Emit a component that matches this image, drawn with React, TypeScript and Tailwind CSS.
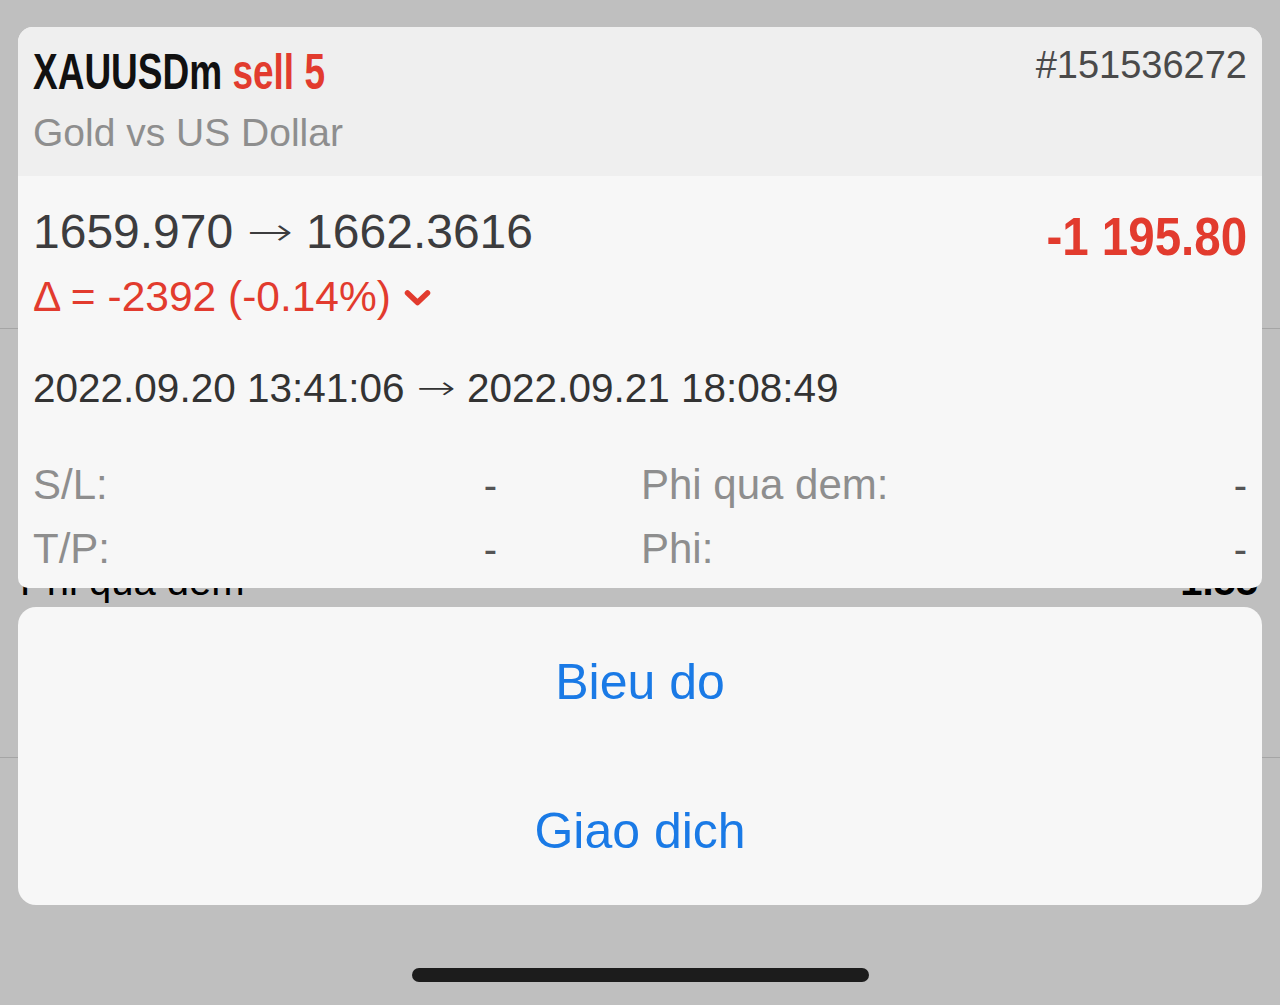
import React from "react";

const SANS = "font-['Liberation_Sans','Helvetica',Arial,sans-serif]";

function Chevron() {
  return (
    <svg width="27" height="18" viewBox="0 0 27 18" className="ml-[13px] mt-[2px]">
      <path d="M3.5 4 L13.5 13.5 L23.5 4" fill="none" stroke="#e23b2e" strokeWidth="5.5" strokeLinecap="round" strokeLinejoin="round" />
    </svg>
  );
}

function Arrow() {
  return (
    <span className="mx-[3px] inline-block origin-center scale-x-[1.15] scale-y-[0.8] font-['DejaVu_Sans',sans-serif] font-extralight">
      →
    </span>
  );
}

function Field({ label, value }: { label: string; value: string }) {
  return (
    <div className="flex h-[64px] items-center justify-between">
      <span className="text-[42px] leading-[48px] text-[#8e8e8e]">{label}</span>
      <span className="text-[40px] leading-[48px] text-[#555]">{value}</span>
    </div>
  );
}

export default function App() {
  return (
    <div className={`relative h-[1005px] w-[1280px] overflow-hidden bg-[#bfbfbf] ${SANS}`}>
      {/* dimmed page behind the sheet */}
      <div className="flex flex-col pt-[328px]">
        <div className="h-px bg-[#a5a5a5]" />
        <div className="flex h-[428px] flex-col">
          <div className="mt-[228px] flex h-[48px] items-center justify-between px-[20px] text-[40px] leading-[48px] text-black">
            <span>Phi qua dem</span>
            <span className="pr-[2px] font-semibold">1.55</span>
          </div>
        </div>
        <div className="h-px bg-[#a5a5a5]" />
      </div>

      {/* action sheet */}
      <div className="absolute inset-0 flex flex-col px-[18px] pt-[27px]">
        <div className="overflow-hidden rounded-t-[15px] rounded-b-[10px] bg-[#f7f7f7]">
          <div className="flex h-[149px] justify-between bg-[#efefef] px-[15px]">
            <div className="flex flex-col pt-[17px]">
              <div className="h-[56px] whitespace-nowrap">
                <span className="inline-block origin-left scale-x-[0.74] text-[50px] leading-[56px] font-bold">
                  <span className="text-[#111]">XAUUSDm</span>{" "}
                  <span className="text-[#e23b2e]">sell 5</span>
                </span>
              </div>
              <div className="mt-[10px] text-[39px] leading-[46px] text-[#8e8e8e]">Gold vs US Dollar</div>
            </div>
            <div className="pt-[15px] text-[38px] leading-[46px] text-[#4a4a4a]">#151536272</div>
          </div>

          <div className="flex h-[412px] flex-col px-[15px] pt-[27px]">
            <div className="flex justify-between">
              <div className="flex flex-col">
                <div className="h-[56px] whitespace-nowrap text-[48px] leading-[56px] text-[#3c3c3e]">
                  1659.970 <Arrow /> 1662.3616
                </div>
                <div className="mt-[16px] flex h-[44px] items-center whitespace-nowrap text-[42.5px] leading-[44px] text-[#e23b2e]">
                  <span>Δ = -2392 (-0.14%)</span>
                  <Chevron />
                </div>
              </div>
              <div className="mt-[5px] h-[56px] whitespace-nowrap">
                <span className="inline-block origin-right scale-x-[0.88] text-[54px] leading-[56px] font-bold text-[#e23b2e]">-1 195.80</span>
              </div>
            </div>
            <div className="mt-[47px] h-[44px] whitespace-nowrap text-[40.5px] leading-[44px] text-[#333]">
              2022.09.20 13:41:06 <Arrow /> 2022.09.21 18:08:49
            </div>
            <div className="mt-[43px] grid grid-cols-[464px_1fr] gap-x-[144px]">
              <div className="flex flex-col">
                <Field label="S/L:" value="-" />
                <Field label="T/P:" value="-" />
              </div>
              <div className="flex flex-col">
                <Field label="Phi qua dem:" value="-" />
                <Field label="Phi:" value="-" />
              </div>
            </div>
          </div>
        </div>

        <div className="mt-[19px] flex h-[298px] flex-col rounded-[18px] bg-[#f7f7f7]">
          <div className="flex h-[150px] items-center justify-center text-[50px] leading-[56px] text-[#1a7ae6]">Bieu do</div>
          <div className="flex h-[148px] items-center justify-center text-[50px] leading-[56px] text-[#1a7ae6]">Giao dich</div>
        </div>

        <div className="mt-[63px] flex justify-center">
          <div className="h-[14px] w-[457px] rounded-full bg-[#1c1c1c]" />
        </div>
      </div>
    </div>
  );
}
